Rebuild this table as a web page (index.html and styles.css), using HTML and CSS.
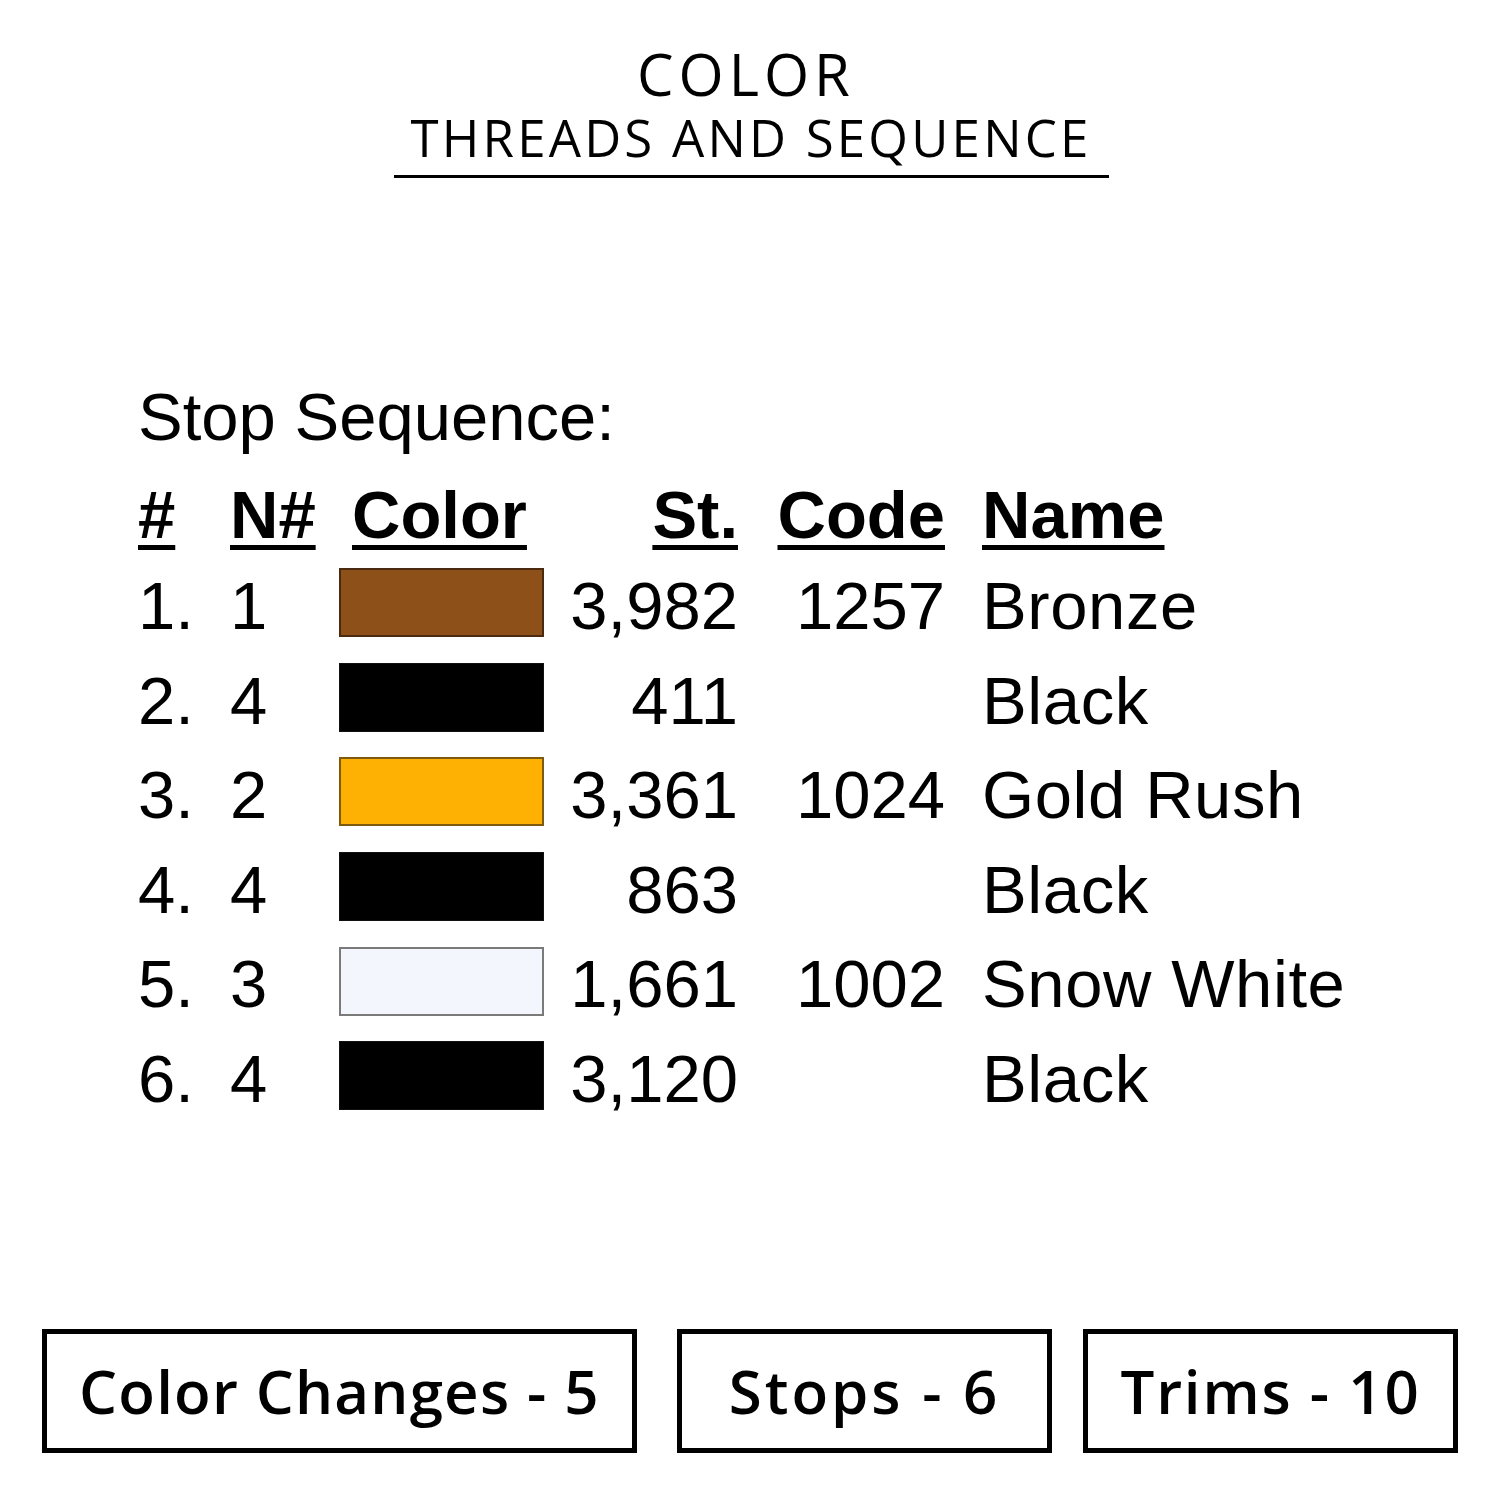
FILE: index.html
```html
<!DOCTYPE html>
<html>
<head>
<meta charset="utf-8">
<link rel="stylesheet" href="styles.css">
</head>
<body>
<div class="page">
  <header class="title">
    <div class="title-main">COLOR</div>
    <div class="title-sub">THREADS AND SEQUENCE</div>
    <div class="title-rule"></div>
  </header>

  <section class="seq">
    <div class="seq-heading">Stop Sequence:</div>
    <div class="seq-table">
      <div class="row head">
        <span class="c-num"><u>#</u></span>
        <span class="c-n"><u>N#</u></span>
        <span class="c-color"><u>Color</u></span>
        <span class="c-st"><u>St.</u></span>
        <span class="c-code"><u>Code</u></span>
        <span class="c-name"><u>Name</u></span>
      </div>
      <div class="row">
        <span class="c-num">1.</span><span class="c-n">1</span>
        <span class="c-sw"><i class="sw sw-bronze"></i></span>
        <span class="c-st">3,982</span><span class="c-code">1257</span><span class="c-name">Bronze</span>
      </div>
      <div class="row">
        <span class="c-num">2.</span><span class="c-n">4</span>
        <span class="c-sw"><i class="sw sw-black"></i></span>
        <span class="c-st">411</span><span class="c-code"></span><span class="c-name">Black</span>
      </div>
      <div class="row">
        <span class="c-num">3.</span><span class="c-n">2</span>
        <span class="c-sw"><i class="sw sw-gold"></i></span>
        <span class="c-st">3,361</span><span class="c-code">1024</span><span class="c-name">Gold Rush</span>
      </div>
      <div class="row">
        <span class="c-num">4.</span><span class="c-n">4</span>
        <span class="c-sw"><i class="sw sw-black"></i></span>
        <span class="c-st">863</span><span class="c-code"></span><span class="c-name">Black</span>
      </div>
      <div class="row">
        <span class="c-num">5.</span><span class="c-n">3</span>
        <span class="c-sw"><i class="sw sw-white"></i></span>
        <span class="c-st">1,661</span><span class="c-code">1002</span><span class="c-name">Snow White</span>
      </div>
      <div class="row">
        <span class="c-num">6.</span><span class="c-n">4</span>
        <span class="c-sw"><i class="sw sw-black"></i></span>
        <span class="c-st">3,120</span><span class="c-code"></span><span class="c-name">Black</span>
      </div>
    </div>
  </section>

  <footer class="stats">
    <div class="stat stat-wide">Color Changes - 5</div>
    <div class="stat stat-mid">Stops - 6</div>
    <div class="stat stat-last">Trims - 10</div>
  </footer>
</div>
</body>
</html>
```

FILE: styles.css
```css
html, body {
  margin: 0;
  padding: 0;
  background: #fff;
}
.page {
  width: 1500px;
  height: 1500px;
  position: relative;
  color: #000;
}

/* Title */
.title {
  padding-top: 44px;
  display: flex;
  flex-direction: column;
  align-items: center;
  font-family: "Open Sans", "Lato", sans-serif;
}
.title-main {
  font-size: 58px;
  font-weight: 500;
  line-height: 60px;
  height: 60px;
  letter-spacing: 5px;
  margin-left: -8px;
}
.title-sub {
  font-size: 51px;
  font-weight: 400;
  line-height: 56px;
  height: 56px;
  letter-spacing: 3.2px;
  margin-top: 5px;
  margin-left: 2px;
}
.title-rule {
  width: 715px;
  height: 3px;
  background: #000;
  margin-top: 10px;
  margin-left: 2px;
}

/* Sequence table */
.seq {
  margin-top: 199px;
  padding-left: 137px;
  font-family: "Liberation Sans", Arial, sans-serif;
  font-size: 67px;
  color: #000;
}
.seq-heading {
  line-height: 80px;
  height: 80px;
  padding-left: 1px;
}
.seq-table {
  margin-top: 14px;
}
.row {
  display: grid;
  grid-template-columns: 93px 109px 205px 196px 206px 1fr;
  height: 94.6px;
  line-height: 94.6px;
  align-items: center;
  white-space: nowrap;
}
.row.head {
  height: 88px;
  line-height: 88px;
  font-weight: bold;
}
.row.head u {
  text-decoration: underline;
  text-decoration-thickness: 5px;
  text-underline-offset: 7px;
}
.c-num { padding-left: 1px; }
.c-n { padding-left: 0; }
.head .c-color { padding-left: 13px; }
.c-st { text-align: right; padding-right: 2px; }
.c-code { text-align: right; padding-right: 1px; }
.c-name { padding-left: 36px; letter-spacing: 0.6px; }
.head .c-name { letter-spacing: 0; }
.c-sw {
  display: flex;
  align-items: center;
  height: 100%;
}
.sw {
  display: block;
  width: 205px;
  height: 69px;
  box-sizing: border-box;
  margin-top: -7px;
}
.sw-bronze { background: #8d5019; border: 2px solid #4a2a10; }
.sw-black { background: #000; border: 1px solid #111; }
.sw-gold { background: #feb102; border: 2px solid #7d5a10; }
.sw-white { background: #f3f7fd; border: 2px solid #7a7a7a; }

/* Stats */
.stats {
  position: absolute;
  left: 42px;
  top: 1329px;
  display: flex;
  font-family: "Open Sans", "Lato", sans-serif;
  font-weight: 600;
}
.stat {
  box-sizing: border-box;
  height: 124px;
  border: 5px solid #000;
  display: flex;
  align-items: center;
  justify-content: center;
  font-size: 60px;
  letter-spacing: 1.2px;
}
.stat-wide { width: 595px; padding-left: 0; }
.stat-mid { width: 375px; margin-left: 40px; letter-spacing: 3px; }
.stat-last { width: 375px; margin-left: 31px; letter-spacing: 1.8px; }
```
